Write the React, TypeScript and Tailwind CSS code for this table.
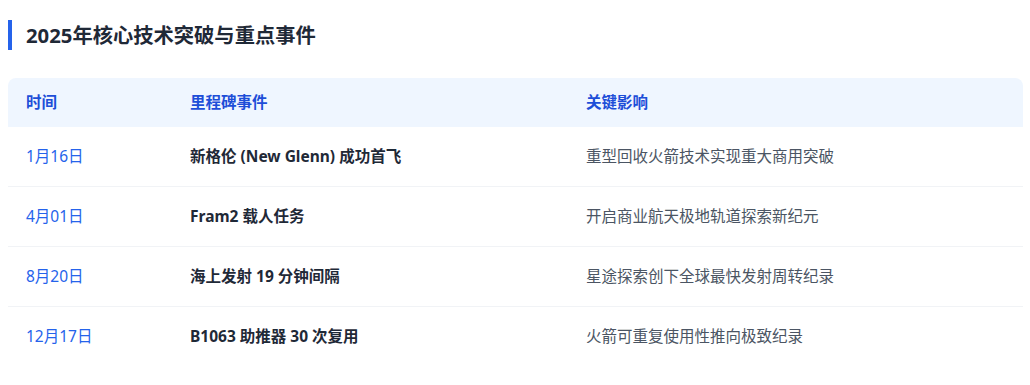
const events = [
  { date: "1月16日", title: "新格伦 (New Glenn) 成功首飞", impact: "重型回收火箭技术实现重大商用突破" },
  { date: "4月01日", title: "Fram2 载人任务", impact: "开启商业航天极地轨道探索新纪元" },
  { date: "8月20日", title: "海上发射 19 分钟间隔", impact: "星途探索创下全球最快发射周转纪录" },
  { date: "12月17日", title: "B1063 助推器 30 次复用", impact: "火箭可重复使用性推向极致纪录" },
];

export default function App() {
  return (
    <div className="min-h-[385px] bg-white px-2 pt-5 font-['Noto_Sans','Noto_Sans_CJK_SC',sans-serif]">
      <div className="flex items-center">
        <div className="h-[30px] w-1 bg-[#2563eb]" />
        <h2 className="ml-[14px] text-[20.3px] font-bold leading-[30px] text-[#1f2937]">
          2025年核心技术突破与重点事件
        </h2>
      </div>

      <div className="mt-7 w-[1015px] overflow-hidden rounded-t-lg">
        <div className="grid h-[49px] grid-cols-[164px_396px_1fr] items-center bg-[#eff6ff] text-[15.5px] font-bold text-[#1d4ed8]">
          <div className="pl-[18px]">时间</div>
          <div className="pl-[18px]">里程碑事件</div>
          <div className="pl-[18px]">关键影响</div>
        </div>
        {events.map((e, i) => (
          <div
            key={e.date}
            className={
              "grid h-[60px] grid-cols-[164px_396px_1fr] items-center text-[15.5px] " +
              (i < events.length - 1 ? "border-b border-[#f1f3f6]" : "")
            }
          >
            <div className="pl-[18px] text-[#2563eb]">{e.date}</div>
            <div className="pl-[18px] font-bold text-[#1f2937]">{e.title}</div>
            <div className="pl-[18px] text-[#4b5563]">{e.impact}</div>
          </div>
        ))}
      </div>
    </div>
  );
}
